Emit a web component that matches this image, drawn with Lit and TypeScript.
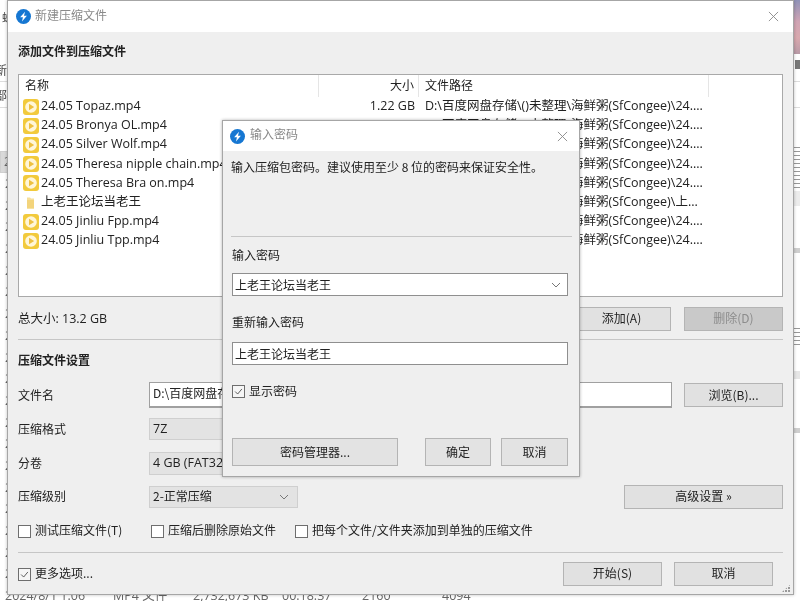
import { LitElement, html, css, svg } from "lit";
import { customElement } from "lit/decorators.js";

const logo = html`<svg class="logo" viewBox="0 0 16 16"><circle cx="8" cy="8" r="8" fill="#1677d2"/><path d="M9.600 2.800 4.400 8.700h3l-1 4.500 5.200-5.900H8.500z" fill="#fff"/></svg>`;
const video = html`<svg class="ficon" viewBox="0 0 16 16"><rect width="16" height="16" rx="3" fill="#f2ca3c"/><circle cx="8" cy="8" r="5.800" fill="#fff6d8"/><path d="M6 4.800v6.400L11.200 8z" fill="#edc040"/></svg>`;
const folder = html`<svg class="ficon" viewBox="0 0 16 16"><path d="M4 2.500h3l1 1h3v10H4z" fill="#f6df9a"/><path d="M4 5h7v8.500H4z" fill="#f3d47c"/></svg>`;
const chev = svg`<path d="M1 1l4 4 4-4" fill="none" stroke="#777" stroke-width="1"/>`;
const chevron = html`<svg class="chev" viewBox="0 0 10 6">${chev}</svg>`;
const close = html`<svg class="x" viewBox="0 0 12 12"><path d="M1 1l10 10M11 1 1 11" stroke="#8a8a8a" stroke-width="1" fill="none"/></svg>`;
const tick = html`<svg viewBox="0 0 13 13"><path d="M2.500 6.500l3 3 5-6" stroke="#444" stroke-width="1" fill="none"/></svg>`;

const P = "D:\\百度网盘存储\\()未整理\\海鲜粥(SfCongee)\\";
const files = [
  ["24.05 Topaz.mp4", "1.22 GB", P + "24....", video],
  ["24.05 Bronya OL.mp4", "", P + "24....", video],
  ["24.05 Silver Wolf.mp4", "", P + "24....", video],
  ["24.05 Theresa nipple chain.mp4", "", P + "24....", video],
  ["24.05 Theresa Bra on.mp4", "", P + "24....", video],
  ["上老王论坛当老王", "", P + "上...", folder],
  ["24.05 Jinliu Fpp.mp4", "", P + "24....", video],
  ["24.05 Jinliu Tpp.mp4", "", P + "24....", video],
];

@customElement("app-root")
export class AppRoot extends LitElement {
  static styles = css`
    :host { display: block; width: 800px; height: 601px; overflow: hidden; position: relative; background: #fff;
      font: 12px/20px "Noto Sans CJK SC", "Open Sans", sans-serif; color: #222; filter: blur(0.4px); }
    * { box-sizing: border-box; }
    .lat { font-family: "Open Sans", "Noto Sans CJK SC", sans-serif; font-size: 12.5px; }
    .up { padding-bottom: 2px; }

    .desk { height: 601px; color: #666; }
    .dhead { height: 151px; display: flex; flex-direction: column; color: #444; white-space: nowrap; }
    .d1 { margin-top: 7px; height: 20px; padding-left: 2px; font-size: 11px; }
    .d2 { margin: 33px 0 0 -5px; height: 22px; border-bottom: 1px solid #ddd; }
    .d3 { margin-left: -5px; height: 26px; line-height: 26px; border-bottom: 1px solid #ddd; }
    .d4 { margin-top: 13px; padding-left: 5px; height: 20px; color: #667; }
    .drow { height: 21.7px; line-height: 22px; padding-left: 5px; display: grid; font-family: "Open Sans", "Noto Sans CJK SC", sans-serif; font-size: 12.5px;
      grid-template-columns: 108px 80px 89px 80px 80px 40px; white-space: nowrap; }
    .drow.sel { background: #d9d9d9; }
    .strip { position: absolute; left: 794px; top: 0; width: 6px; height: 601px; display: flex; flex-direction: column; }
    .pink { height: 54px; flex: none; background: linear-gradient(#8f92b8, #d0a4b4 40%, #d9a8ae 70%, #b89aa6); }
    .glyph { width: 5px; height: 9px; margin: 6px 0 0 1px; background: #777; flex: none; }
    .dash { flex: none; background: repeating-linear-gradient(#999 0 1px, #fff 1px 4px); }
    .d-a { height: 44px; margin-top: 78px; }
    .block { height: 15px; background: #ececec; flex: none; }
    .notch { height: 5px; margin-top: 42px; background: #cfcfcf; flex: none; }
    .d-b { height: 20px; margin-top: 75px; }
    .block2 { height: 8px; margin-top: 23px; background: #e6e6e6; flex: none; }
    .notch2 { height: 5px; margin-top: 49px; background: #cfcfcf; flex: none; }

    .win { position: absolute; background: #efefef; border: 1px solid #a6a6a6; display: flex; flex-direction: column; }
    .main { left: 7px; top: 0; width: 787px; height: 595px; box-shadow: 0 0 3px rgba(0,0,0,.25); padding: 0 10px; }
    .modal { left: 222px; top: 120px; width: 358px; height: 357px; padding: 0 12px 0 8px; box-shadow: 0 0 3px rgba(0,0,0,.3); }
    .title { display: flex; align-items: center; background: #fff; color: #8a8a8a; gap: 4px; flex: none; }
    .main .title { height: 31px; margin: 0 -10px; padding: 0 14px 0 8px; }
    .modal .title { height: 30px; margin: 0 -12px 0 -8px; padding: 0 11px 0 7px; gap: 5px; }
    .title span { flex: 1; padding-bottom: 3px; }
    .modal .title span { padding-bottom: 4px; }
    .logo { width: 15px; height: 15px; flex: none; }
    .x { width: 11px; height: 11px; flex: none; }

    .h { font-weight: 700; height: 20px; line-height: 18px; }
    .list { height: 223px; margin-top: 12px; background: #fff; border: 1px solid #a9a9a9; overflow: hidden; }
    .cols { display: grid; grid-template-columns: 300px 100px 290px; height: 22px; align-items: center; }
    .cols > div { padding: 0 6px; height: 22px; line-height: 20px; border-right: 1px solid #e5e5e5; }
    .cols > div.r { text-align: right; padding-right: 4px; }
    .frow { display: grid; grid-template-columns: 300px 100px 290px; height: 19.2px; line-height: 17px; color: #222; white-space: nowrap; }
    .name { display: flex; align-items: center; gap: 2px; padding-left: 4px; line-height: 17px; }
    .name span { padding-bottom: 2px; }
    .size { text-align: right; padding-right: 4px; }
    .path { padding-left: 6px; overflow: hidden; }
    .ficon { width: 16px; height: 16px; flex: none; }

    .sumrow { display: flex; align-items: center; height: 24px; margin-top: 10px; gap: 13px; }
    .grow { flex: 1; }
    .btn { height: 24px; width: 99px; background: #e1e1e1; border: 1px solid #b4b4b4; display: flex; align-items: center; justify-content: center; flex: none; }
    .btn.off { background: #c9c9c9; color: #8c8c8c; }
    hr { border: 0; height: 1px; background: #c6c6c6; margin: 8px 0 0; flex: none; }

    .frm { display: flex; align-items: center; }
    .frm .lb { width: 131px; flex: none; }
    .inp { height: 26px; flex: none; width: 523px; background: #fff; border: 1px solid #a0a0a0; border-bottom-width: 2px; padding-left: 3px; line-height: 20px; }
    .sel { height: 22px; width: 149px; background: #e3e3e3; border: 1px solid #cfcfcf; padding: 0 8px 0 3px; display: flex; align-items: center; justify-content: space-between; flex: none; }
    .sel.tall { height: 23px; }
    .chev { width: 10px; height: 6px; flex: none; }

    .chk { display: flex; align-items: center; gap: 4px; height: 20px; }
    .chk span { padding-bottom: 2px; }
    .box { width: 13px; height: 13px; background: #fff; border: 1px solid #6e6e6e; flex: none; display: block; }
    .box.on { background: #f6f6f6; }
    .box svg { display: block; width: 11px; height: 11px; }
    .checks { display: flex; margin-top: 12px; }
    .w1 { width: 133px; }
    .w2 { width: 144px; }

    .foot { display: flex; align-items: center; margin-top: 9px; }
    .foot .btn { padding-bottom: 2px; }
    .foot .btn.last { margin: 0 10px 0 12px; }
    .wide { width: 159px; }
    .grip { position: absolute; right: 2px; bottom: 2px; width: 9px; height: 8px; background: radial-gradient(circle at 1px 1px, #999 1px, transparent 1px) 0 0/3px 3px; clip-path: polygon(100% 0, 100% 100%, 0 100%); }

    .mt10 { margin-top: 10px; }
    .mt11 { margin-top: 11px; }
    .mt12 { margin-top: 12px; }

    .intro { margin-top: 6px; height: 20px; white-space: nowrap; }
    .modal hr { margin: 59px -5px 0 0; }
    .m-l { margin-top: 8px; height: 20px; padding-left: 1px; }
    .m-l.re { margin-top: 16px; }
    .m-sel { height: 23px; margin: 8px 0 0 1px; width: 336px; background: #fff; border: 1px solid #8f8f8f; display: flex; align-items: center; justify-content: space-between; padding: 0 6px 0 2px; flex: none; }
    .m-sel.re { margin-top: 10px; }
    .m-chk { margin: 16px 0 0 1px; }
    .m-chk span { padding-bottom: 0; }
    .m-foot { display: flex; margin: 37px 0 0 1px; width: 336px; }
    .m-foot .btn { height: 28px; background: #e3e3e3; }
    .m-foot .pw { width: 166px; }
    .m-foot .ok { width: 66px; }
    .m-foot .no { width: 67px; margin-left: 10px; }
  `;

  render() {
    return html`
      <div class="desk">
        <div class="dhead">
          <div class="d1">蛛</div>
          <div class="d2">新建</div>
          <div class="d3">部(G</div>
          <div class="d4">日</div>
        </div>
        ${Array.from({ length: 21 }, (_, i) => html`<div class="drow ${i === 0 ? "sel" : ""}">
          <span>2024/8/1 1:06</span><span>MP4 文件</span><span>2,732,673 KB</span><span>00:18:37</span><span>2160</span><span>4094</span>
        </div>`)}
      </div>
      <div class="strip">
        <div class="pink"></div><div class="glyph"></div>
        <div class="dash d-a"></div><div class="block"></div><div class="notch"></div>
        <div class="dash d-b"></div><div class="block2"></div><div class="notch2"></div>
      </div>

      <div class="win main">
        <div class="title">${logo}<span>新建压缩文件</span>${close}</div>
        <div class="h mt10">添加文件到压缩文件</div>
        <div class="list">
          <div class="cols"><div>名称</div><div class="r">大小</div><div>文件路径</div></div>
          ${files.map((f) => html`<div class="frow">
            <div class="name">${f[3]}<span class="lat">${f[0]}</span></div>
            <div class="size lat">${f[1]}</div>
            <div class="path lat">${f[2]}</div>
          </div>`)}
        </div>
        <div class="sumrow"><span class="lat">总大小: 13.2 GB</span><span class="grow"></span><div class="btn up">添加(A)</div><div class="btn off up">删除(D)</div></div>
        <hr />
        <div class="h mt11">压缩文件设置</div>
        <div class="frm mt11"><div class="lb">文件名</div><div class="inp">D:\\百度网盘存储\\()未整理</div><span class="grow"></span><div class="btn">浏览(B)...</div></div>
        <div class="frm mt10"><div class="lb">压缩格式</div><div class="sel"><span class="lat">7Z</span>${chevron}</div></div>
        <div class="frm mt12"><div class="lb up">分卷</div><div class="sel tall"><span class="lat up">4 GB (FAT32)</span>${chevron}</div></div>
        <div class="frm mt10"><div class="lb up">压缩级别</div><div class="sel"><span class="up">2-正常压缩</span>${chevron}</div><span class="grow"></span><div class="btn wide up">高级设置 »</div></div>
        <div class="checks">
          <div class="chk w1"><i class="box"></i><span>测试压缩文件(T)</span></div>
          <div class="chk w2"><i class="box"></i><span>压缩后删除原始文件</span></div>
          <div class="chk"><i class="box"></i><span>把每个文件/文件夹添加到单独的压缩文件</span></div>
        </div>
        <hr class="mt11" />
        <div class="foot"><div class="chk"><i class="box on">${tick}</i><span>更多选项...</span></div><span class="grow"></span><div class="btn">开始(S)</div><div class="btn last">取消</div></div>
        <div class="grip"></div>
      </div>

      <div class="win modal">
        <div class="title">${logo}<span>输入密码</span>${close}</div>
        <div class="intro">输入压缩包密码。建议使用至少 8 位的密码来保证安全性。</div>
        <hr />
        <div class="m-l">输入密码</div>
        <div class="m-sel"><span>上老王论坛当老王</span>${chevron}</div>
        <div class="m-l re">重新输入密码</div>
        <div class="m-sel re"><span>上老王论坛当老王</span></div>
        <div class="chk m-chk"><i class="box on">${tick}</i><span>显示密码</span></div>
        <div class="m-foot"><div class="btn pw">密码管理器...</div><span class="grow"></span><div class="btn ok">确定</div><div class="btn no">取消</div></div>
      </div>
    `;
  }
}
